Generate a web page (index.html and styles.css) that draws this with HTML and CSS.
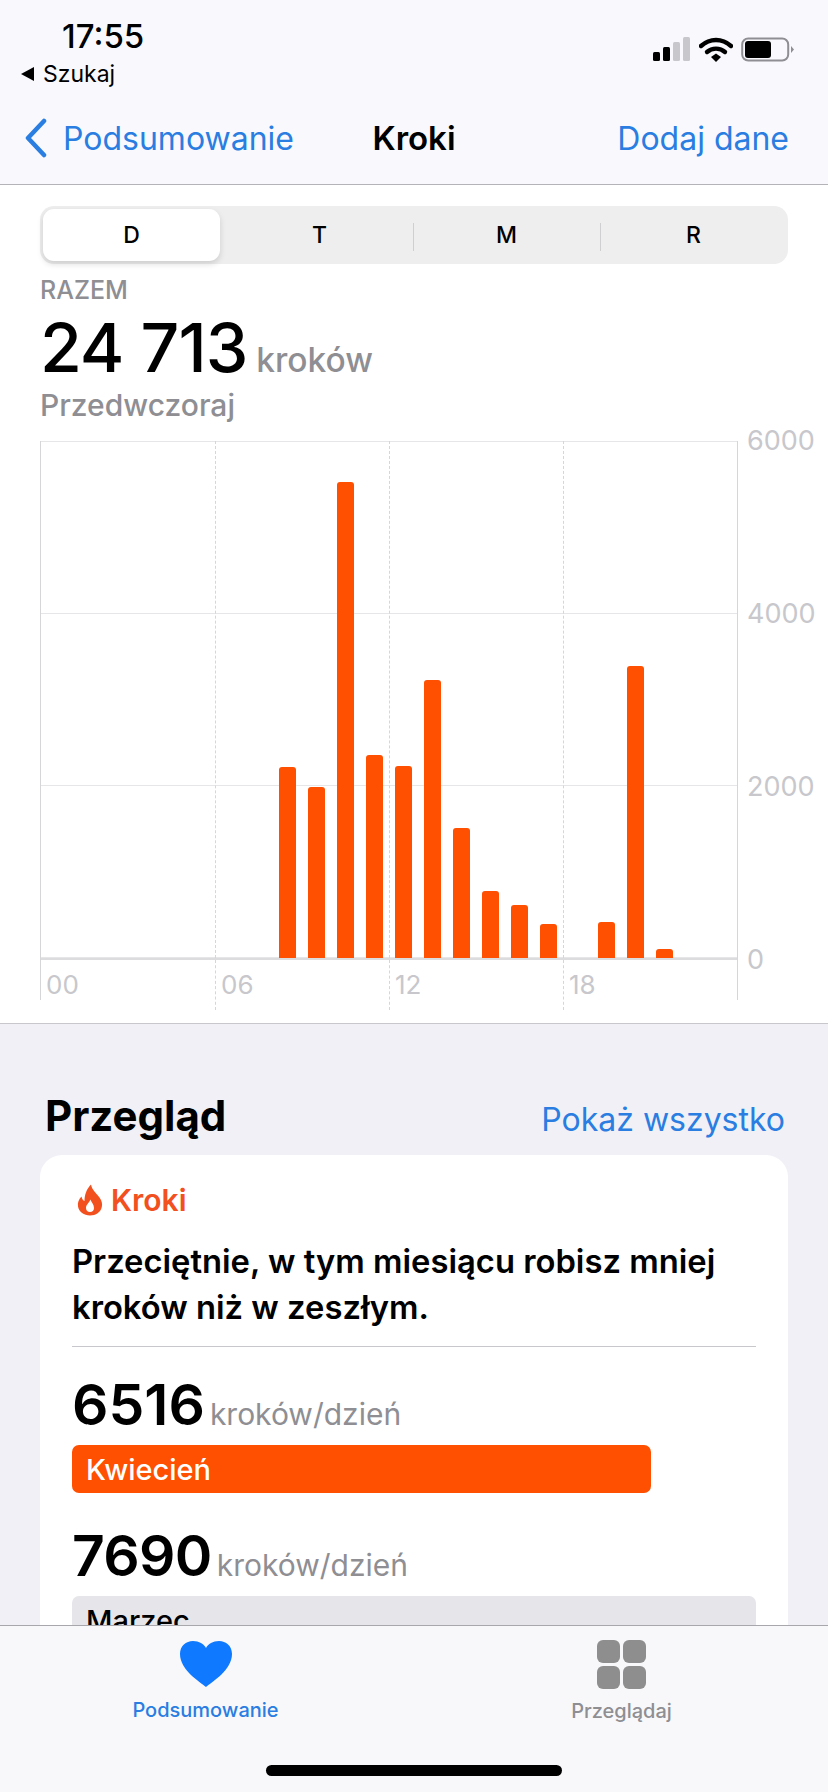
FILE: index.html
```html
<!DOCTYPE html>
<html lang="pl">
  <head>
    <meta charset="UTF-8" />
    <meta name="viewport" content="width=device-width, initial-scale=1.0" />
    <title>Kroki</title>
    <link rel="stylesheet" href="styles.css">
  </head>

  <body>
    <header class="top">
      <div class="status">
        <div class="status-left">
          <span class="time">17:55</span>
          <span class="back-app"><span class="back-arrow"></span>Szukaj</span>
        </div>
        <div class="status-icons">
          <svg class="signal" width="38" height="26" viewBox="0 0 38 26">
            <rect x="0" y="15" width="7" height="9" rx="1.5" fill="#000" />
            <rect x="10" y="10" width="7" height="14" rx="1.5" fill="#000" />
            <rect x="20" y="5" width="7" height="19" rx="1.5" fill="#c8c8cc" />
            <rect x="30" y="0" width="7" height="24" rx="1.5" fill="#c8c8cc" />
          </svg>
          <svg class="wifi" width="34" height="26" viewBox="0 0 34 26">
            <path d="M2 9 C11 1 23 1 32 9" fill="none" stroke="#000" stroke-width="4.4" stroke-linecap="round" />
            <path d="M8 15 C13 10.500 21 10.500 26 15" fill="none" stroke="#000" stroke-width="4.400" stroke-linecap="round" />
            <path d="M12 20 L17 16.500 L22 20 L17 25 Z" fill="#000" />
          </svg>
          <svg class="battery" width="54" height="26" viewBox="0 0 54 26">
            <rect x="1.200" y="1.500" width="46" height="22" rx="6" fill="none" stroke="#8e8e93" stroke-width="2" />
            <rect x="4" y="4" width="26" height="17" rx="3" fill="#000" />
            <path d="M50 9 L53 12.500 L50 16 Z" fill="#8e8e93" />
          </svg>
        </div>
      </div>
      <nav class="navbar">
        <a class="nav-back">
          <svg width="28" height="40" viewBox="0 0 28 40">
            <path d="M22 3 L6 20 L22 37" fill="none" stroke="#2a7de1" stroke-width="4.500" stroke-linecap="round" stroke-linejoin="round" />
          </svg>
          Podsumowanie
        </a>
        <span class="nav-title">Kroki</span>
        <a class="nav-action">Dodaj dane</a>
      </nav>
    </header>

    <section class="summary">
      <div class="segments">
        <span class="segment active">D</span>
        <span class="segment">T</span>
        <span class="segment divided">M</span>
        <span class="segment divided">R</span>
      </div>

      <p class="total-label">RAZEM</p>
      <p class="total"><span class="total-value">24 713</span> <span class="total-unit">kroków</span></p>
      <p class="total-day">Przedwczoraj</p>

      <div class="chart">
        <div class="plot">
          <div class="plot-area">
            <div class="h-lines"><i></i><i></i><i></i><i></i></div>
            <div class="v-lines"><i></i><i></i><i></i><i></i></div>
            <div class="bars">
              <span style="grid-column: 9; height: 191px"></span>
              <span style="grid-column: 10; height: 171px"></span>
              <span style="grid-column: 11; height: 476px"></span>
              <span style="grid-column: 12; height: 203px"></span>
              <span style="grid-column: 13; height: 192px"></span>
              <span style="grid-column: 14; height: 278px"></span>
              <span style="grid-column: 15; height: 130px"></span>
              <span style="grid-column: 16; height: 67px"></span>
              <span style="grid-column: 17; height: 53px"></span>
              <span style="grid-column: 18; height: 34px"></span>
              <span style="grid-column: 20; height: 36px"></span>
              <span style="grid-column: 21; height: 292px"></span>
              <span style="grid-column: 22; height: 9px"></span>
            </div>
          </div>
          <div class="x-axis">
            <span>00</span>
            <span>06</span>
            <span>12</span>
            <span>18</span>
          </div>
        </div>
        <div class="y-axis">
          <span>6000</span>
          <span>4000</span>
          <span>2000</span>
          <span>0</span>
        </div>
      </div>
    </section>

    <main class="overview">
      <div class="overview-head">
        <h2>Przegląd</h2>
        <a>Pokaż wszystko</a>
      </div>
      <article class="card">
        <div class="card-title">
          <svg width="26" height="32" viewBox="0 0 26 32">
            <path fill-rule="evenodd" d="M14 0.500 C15 6 19 8.500 22.500 13.500 C25 17 25.500 20 24.800 23 C23.500 28.500 18.800 31.500 13 31.500 C7 31.500 2 28 1 22.500 C0.300 18.500 2 15 4.500 12.500 C5 15 6 16.500 7.500 17 C7.500 11 9.500 5 14 0.500 Z M13.300 15.500 C12.800 18.500 9 20.500 9 24 C9 26.500 10.800 28 13 28 C15.300 28 17 26.500 17 24 C17 20.500 14.500 18.500 13.300 15.500 Z" fill="#f2501e" />
          </svg>
          Kroki
        </div>
        <p class="card-text">Przeciętnie, w tym miesiącu robisz mniej kroków niż w zeszłym.</p>
        <hr />
        <div class="stat">
          <span class="stat-value">6516</span>
          <span class="stat-unit">kroków/dzień</span>
        </div>
        <div class="month current">Kwiecień</div>
        <div class="stat second">
          <span class="stat-value">7690</span>
          <span class="stat-unit">kroków/dzień</span>
        </div>
        <div class="month previous">Marzec</div>
      </article>
    </main>

    <footer class="tabbar">
      <div class="tabs">
        <a class="tab selected">
          <svg width="54" height="48" viewBox="0 0 54 48">
            <path d="M27 47 C21 42 1 30 1 14 C1 6 7 1 14 1 C20 1 25 4 27 8 C29 4 34 1 40 1 C47 1 53 6 53 14 C53 30 33 42 27 47 Z" fill="#0f7aff" />
          </svg>
          Podsumowanie
        </a>
        <a class="tab">
          <span class="browse-icon"><i></i><i></i><i></i><i></i></span>
          Przeglądaj
        </a>
      </div>
      <div class="home-bar"></div>
    </footer>
  </body>
</html>
```

FILE: styles.css
```css
* {
  margin: 0;
  padding: 0;
  box-sizing: border-box;
}

body {
  position: relative;
  width: 828px;
  height: 1792px;
  overflow: hidden;
  font-family: "Inter", "Liberation Sans", sans-serif;
  background-color: #f1f0f6;
  color: #000;
}

/* top bars */
.top {
  height: 185px;
  background-color: #f9f9fd;
  border-bottom: 1px solid #b4b4b8;
}

.status {
  display: flex;
  justify-content: space-between;
  height: 92px;
  padding: 18px 33px 0 21px;
}

.status-left {
  display: flex;
  flex-direction: column;
}

.time {
  margin-left: 41px;
  font-size: 33px;
  font-weight: 500;
  line-height: 36px;
}

.back-app {
  display: flex;
  align-items: center;
  gap: 9px;
  font-size: 23px;
  line-height: 40px;
}

.back-arrow {
  width: 0;
  height: 0;
  border-top: 7px solid transparent;
  border-bottom: 7px solid transparent;
  border-right: 13px solid #000;
}

.status-icons {
  display: flex;
  align-items: center;
  gap: 8px;
  height: 64px;
}

.navbar {
  display: grid;
  grid-template-columns: 1fr auto 1fr;
  align-items: center;
  height: 92px;
  padding: 0 39px;
  font-size: 32px;
}

.nav-back {
  display: flex;
  align-items: center;
  gap: 13px;
  margin-left: -17px;
  color: #2a7de1;
}

.nav-title {
  font-size: 33px;
  font-weight: 600;
}

.nav-action {
  justify-self: end;
  color: #2a7de1;
}

/* chart section */
.summary {
  height: 839px;
  padding: 21px 0 0 40px;
  background-color: #fff;
  border-bottom: 1px solid #c8c8cc;
}

.segments {
  display: grid;
  grid-template-columns: 183px repeat(3, 187px);
  width: 748px;
  height: 58px;
  padding: 3px 1px 3px 3px;
  background-color: #eeeeef;
  border-radius: 14px;
}

.segment {
  display: flex;
  align-items: center;
  justify-content: center;
  font-size: 23px;
  font-weight: 500;
  position: relative;
}

.segment.active {
  margin-right: 6px;
  background-color: #fff;
  border-radius: 11px;
  box-shadow: 0 3px 6px rgba(0, 0, 0, 0.14);
}

.segment.divided::before {
  content: "";
  position: absolute;
  left: 0;
  top: 14px;
  bottom: 10px;
  border-left: 1px solid #cfcfd2;
}

.total-label {
  margin-top: 12px;
  font-size: 25px;
  font-weight: 500;
  line-height: 28px;
  color: #8e8e93;
}

.total {
  display: flex;
  align-items: baseline;
  gap: 9px;
  height: 70px;
  margin-top: 8px;
}

.total-value {
  font-size: 68px;
  font-weight: 500;
  line-height: 70px;
  letter-spacing: -1px;
}

.total-unit {
  font-size: 33.5px;
  font-weight: 500;
  color: #8e8e93;
}

.total-day {
  margin-top: 5px;
  font-size: 30px;
  font-weight: 500;
  line-height: 36px;
  color: #8e8e93;
}

.chart {
  display: flex;
  margin-top: 18px;
}

.plot {
  width: 698px;
  border-left: 1px solid #d6d6d8;
  border-right: 1px solid #d6d6d8;
}

.plot-area {
  position: relative;
  height: 519px;
  border-bottom: 2px solid #dcdcde;
}

.h-lines {
  position: absolute;
  inset: 0;
  display: flex;
  flex-direction: column;
  justify-content: space-between;
}

.h-lines i {
  display: block;
  border-top: 1px solid #e6e6e8;
}

.v-lines {
  position: absolute;
  inset: 0;
  display: grid;
  grid-template-columns: repeat(4, 1fr);
}

.v-lines i {
  border-left: 1px dashed #d6d6d8;
}

.v-lines i:first-child {
  border-left: none;
}

.bars {
  position: absolute;
  inset: 0;
  display: grid;
  grid-template-columns: repeat(24, 1fr);
  align-items: end;
}

.bars span {
  grid-row: 1;
  justify-self: center;
  width: 17px;
  background-color: #ff4f00;
  border-radius: 3px 3px 0 0;
}

.x-axis {
  display: grid;
  grid-template-columns: repeat(4, 1fr);
  height: 40px;
  font-size: 26px;
  line-height: 50px;
  color: #c7c7cc;
}

.x-axis span {
  padding-left: 5px;
  border-left: 1px dashed #d6d6d8;
}

.x-axis span:first-child {
  border-left: none;
}

.y-axis {
  display: flex;
  flex-direction: column;
  justify-content: space-between;
  height: 519px;
  margin: 0 0 0 9px;
  font-size: 27px;
  color: #c7c7cc;
}

.y-axis span {
  height: 0;
  line-height: 0;
}

/* overview section */
.overview {
  padding: 0 40px;
}

.overview-head {
  display: flex;
  align-items: center;
  justify-content: space-between;
  height: 131px;
  padding: 51px 3px 0 5px;
}

.overview-head h2 {
  font-size: 42px;
  font-weight: 700;
}

.overview-head a {
  margin-top: 8px;
  font-size: 32px;
  color: #2a7de1;
}

.card {
  height: 700px;
  padding: 27px 32px;
  background-color: #fff;
  border-radius: 22px;
}

.card-title {
  display: flex;
  align-items: center;
  gap: 8px;
  padding-left: 5px;
  font-size: 30px;
  font-weight: 600;
  color: #f2501e;
}

.card-text {
  margin-top: 20px;
  font-size: 32.75px;
  font-weight: 600;
  line-height: 46px;
}

.card hr {
  margin-top: 16px;
  border: none;
  border-top: 1px solid #c8c8cc;
}

.stat {
  display: flex;
  align-items: baseline;
  gap: 5px;
  margin-top: 20px;
  height: 78px;
}

.stat.second {
  margin-top: 25px;
}

.stat-value {
  font-size: 57px;
  font-weight: 600;
  line-height: 76px;
}

.stat.second .stat-value {
  letter-spacing: -0.7px;
}

.stat-unit {
  font-size: 30px;
  color: #8e8e93;
}

.month {
  display: flex;
  align-items: center;
  height: 48px;
  padding-left: 14px;
  font-size: 29px;
  font-weight: 500;
  border-radius: 7px;
}

.month.current {
  width: 579px;
  background-color: #ff4f00;
  color: #fff;
}

.month.previous {
  background-color: #e5e5ea;
}

/* tab bar lies over the card */
.tabbar {
  position: absolute;
  left: 0;
  right: 0;
  bottom: 0;
  height: 167px;
  background-color: #f8f8fa;
  border-top: 1px solid #a8a8ac;
}

.tabs {
  display: grid;
  grid-template-columns: 411px 1fr;
  padding-top: 14px;
}

.tab {
  display: flex;
  flex-direction: column;
  align-items: center;
  gap: 10px;
  font-size: 20px;
  font-weight: 500;
  color: #8e8e93;
}

.tab + .tab {
  padding-left: 4px;
}

.tab.selected {
  color: #2a7de1;
}

.browse-icon {
  display: grid;
  grid-template-columns: repeat(2, 23px);
  gap: 3px;
}

.browse-icon i {
  height: 23px;
  border-radius: 6px;
  background-color: #8e8e8e;
}

.home-bar {
  position: absolute;
  left: 266px;
  bottom: 16px;
  width: 296px;
  height: 11px;
  border-radius: 6px;
  background-color: #000;
}
```
